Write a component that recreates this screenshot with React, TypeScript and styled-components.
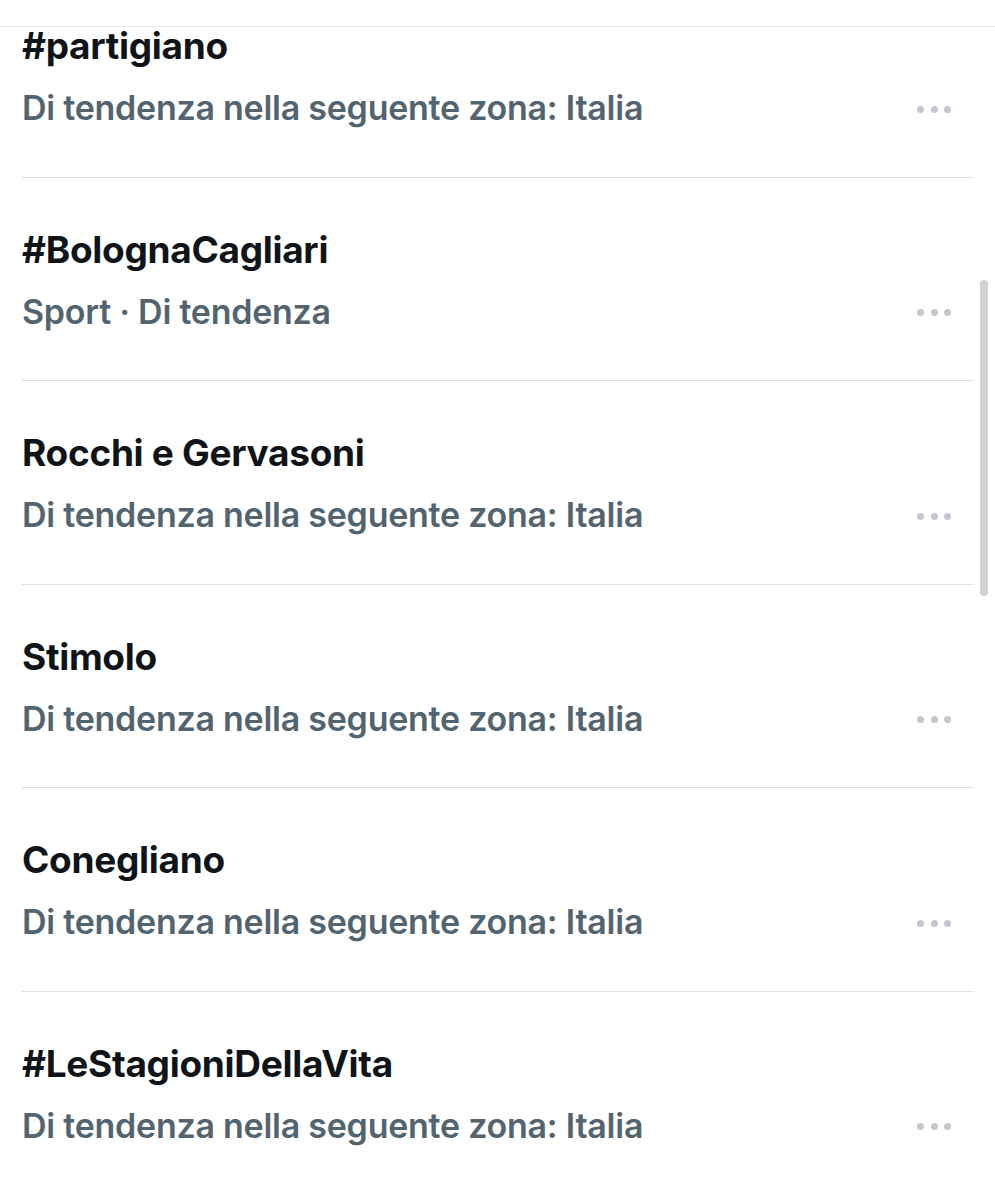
import React from "react";
import styled, { createGlobalStyle } from "styled-components";

const GlobalStyle = createGlobalStyle`
  html, body {
    margin: 0;
    padding: 0;
    background: #ffffff;
  }
  body {
    font-family: Inter, "Noto Sans", "Liberation Sans", sans-serif;
    overflow: hidden;
  }
`;

const Page = styled.div`
  width: 995px;
  height: 1200px;
  overflow: hidden;
  position: relative;
  background: #ffffff;
`;

const Header = styled.div`
  position: relative;
  z-index: 2;
  height: 26px;
  background: #ffffff;
  border-bottom: 1px solid #e3e7eb;
`;

// list is scrolled a bit, first row partly hidden under the header
const List = styled.div`
  margin-top: -53px;
  display: flex;
  flex-direction: column;
`;

const Row = styled.div`
  flex-shrink: 0;
  height: 203.6px;
  margin: 0 22px;
  padding: 50px 0 0;
  box-sizing: border-box;
  border-bottom: 1px solid #dbdfe3;
  display: flex;
  flex-direction: column;

  &:last-child {
    border-bottom: none;
  }
`;

const Title = styled.div`
  font-size: 37px;
  line-height: 44px;
  font-weight: 700;
  color: #0f1419;
  letter-spacing: -0.3px;
  white-space: nowrap;
`;

const MetaLine = styled.div`
  margin-top: 18px;
  display: flex;
  align-items: center;
  justify-content: space-between;
`;

const Meta = styled.div`
  font-size: 34px;
  line-height: 44px;
  font-weight: 600;
  color: #536471;
  letter-spacing: -0.25px;
  white-space: nowrap;
`;

const MoreButton = styled.button`
  border: none;
  background: none;
  padding: 0;
  margin-right: 22px;
  margin-top: 2px;
  display: flex;
  gap: 6.5px;
  cursor: pointer;
`;

const Dot = styled.span`
  width: 7px;
  height: 7px;
  border-radius: 50%;
  background: #c1c8cf;
`;

const Scrollbar = styled.div`
  position: absolute;
  z-index: 3;
  top: 280px;
  left: 980px;
  width: 8px;
  height: 316px;
  border-radius: 4px;
  background: #d1d1d1;
`;

const trends = [
  { name: "#partigiano", meta: "Di tendenza nella seguente zona: Italia" },
  { name: "#BolognaCagliari", meta: "Sport · Di tendenza" },
  { name: "Rocchi e Gervasoni", meta: "Di tendenza nella seguente zona: Italia" },
  { name: "Stimolo", meta: "Di tendenza nella seguente zona: Italia" },
  { name: "Conegliano", meta: "Di tendenza nella seguente zona: Italia" },
  { name: "#LeStagioniDellaVita", meta: "Di tendenza nella seguente zona: Italia" },
];

export default function App() {
  return (
    <Page>
      <GlobalStyle />
      <Header />
      <List>
        {trends.map((t) => (
          <Row key={t.name}>
            <Title>{t.name}</Title>
            <MetaLine>
              <Meta>{t.meta}</Meta>
              <MoreButton aria-label="Altro">
                <Dot />
                <Dot />
                <Dot />
              </MoreButton>
            </MetaLine>
          </Row>
        ))}
      </List>
      <Scrollbar />
    </Page>
  );
}
